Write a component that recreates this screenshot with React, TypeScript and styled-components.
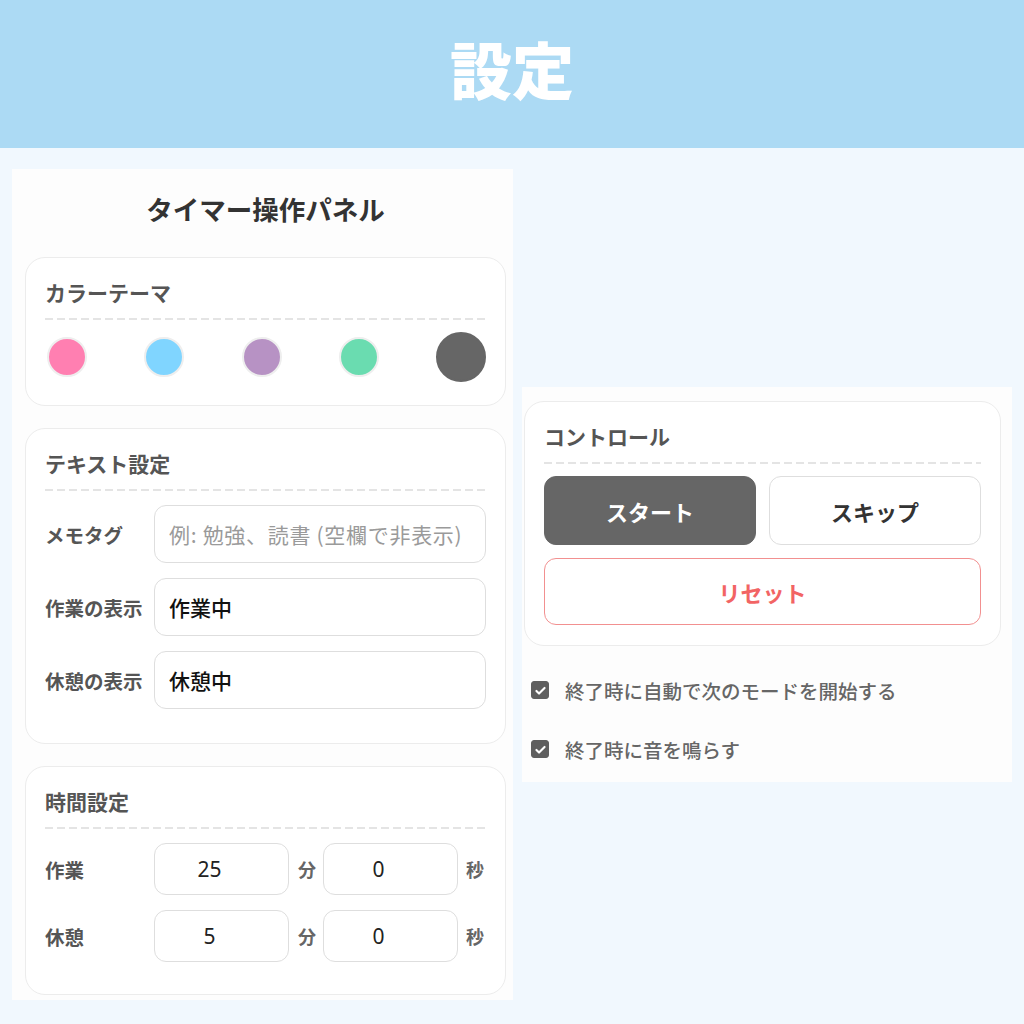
import { useState } from 'react';
import styled, { createGlobalStyle } from 'styled-components';

const GlobalStyle = createGlobalStyle`
  * {
    box-sizing: border-box;
  }

  body {
    margin: 0;
    background: #f1f8fe;
    font-family: 'Noto Sans CJK JP', 'Noto Sans', sans-serif;
    color: #333;
  }
`;

const Page = styled.div`
  width: 1024px;
  height: 1024px;
  display: flex;
  flex-direction: column;
  overflow: hidden;
`;

const Header = styled.header`
  height: 148px;
  flex-shrink: 0;
  background: #acdaf4;
  display: flex;
  align-items: center;
  justify-content: center;
`;

const HeaderTitle = styled.h1`
  margin: 0 0 12px;
  font-size: 62px;
  font-weight: 900;
  line-height: 1;
  color: #fff;
`;

const Content = styled.main`
  display: flex;
  align-items: center;
  gap: 9px;
  padding: 21px 12px 24px;
`;

const Panel = styled.section<{ $width: number; $pad: string }>`
  width: ${(p) => p.$width}px;
  padding: ${(p) => p.$pad};
  background: #fdfdfd;
  display: flex;
  flex-direction: column;
`;

const PanelTitle = styled.h2`
  margin: 0 0 30px;
  font-size: 26.5px;
  line-height: 36px;
  font-weight: 700;
  text-align: center;
  color: #333;
`;

const CardStack = styled.div`
  display: flex;
  flex-direction: column;
  gap: 22px;
`;

const Card = styled.div<{ $pb: number }>`
  background: #fff;
  border: 1px solid #ececec;
  border-radius: 20px;
  padding: 19px 19px ${(p) => p.$pb}px;
`;

const CardTitle = styled.h3`
  margin: 0;
  font-size: 21px;
  line-height: 30px;
  font-weight: 700;
  color: #555;
`;

const Divider = styled.div<{ $mb?: number }>`
  height: 2px;
  margin: 11px 0 ${(p) => p.$mb ?? 14}px;
  background: repeating-linear-gradient(to right, #e4e4e4 0 8px, transparent 8px 12px);
`;

const Swatches = styled.div`
  height: 40px;
  display: flex;
  align-items: center;
  justify-content: space-between;
  padding: 0 0 0 2px;
`;

const Swatch = styled.button<{ $color: string; $active?: boolean }>`
  width: ${(p) => (p.$active ? 50 : 40)}px;
  height: ${(p) => (p.$active ? 50 : 40)}px;
  padding: 0;
  border-radius: 50%;
  background: ${(p) => p.$color};
  border: 2px solid ${(p) => (p.$active ? p.$color : '#eeeeee')};
  cursor: pointer;
`;

const Rows = styled.div`
  display: flex;
  flex-direction: column;
  gap: 15px;
`;

const Row = styled.label`
  display: flex;
  align-items: center;
`;

const Label = styled.span`
  width: 100px;
  margin-right: 9px;
  flex-shrink: 0;
  font-size: 19.5px;
  font-weight: 700;
  color: #555;
  white-space: nowrap;
`;

const TextInput = styled.input`
  flex: 1;
  min-width: 0;
  height: 58px;
  padding: 0 14px;
  border: 1.5px solid #dedede;
  border-radius: 12px;
  background: #fff;
  font-family: 'Noto Sans CJK JP', sans-serif;
  font-size: 21px;
  font-weight: 500;
  color: #111;
  outline: none;

  &::placeholder {
    color: #9a9a9a;
    font-weight: 400;
    letter-spacing: 0.7px;
  }
`;

const NumberInput = styled.input`
  width: 135px;
  height: 52px;
  padding: 0 24px 0 0;
  border: 1.5px solid #dedede;
  border-radius: 12px;
  background: #fff;
  text-align: center;
  font-family: 'Noto Sans', 'Noto Sans CJK JP', sans-serif;
  font-size: 21px;
  color: #222;
  outline: none;
`;

const Unit = styled.span<{ $w: number; $ml: number }>`
  width: ${(p) => p.$w}px;
  margin-left: ${(p) => p.$ml}px;
  flex-shrink: 0;
  font-size: 18px;
  font-weight: 700;
  color: #666;
`;

const ButtonGrid = styled.div`
  display: grid;
  grid-template-columns: 1fr 1fr;
  gap: 13px;
`;

const Button = styled.button<{ $variant: 'primary' | 'plain' | 'danger'; $h: number }>`
  height: ${(p) => p.$h}px;
  border-radius: 12px;
  font-family: 'Noto Sans CJK JP', sans-serif;
  font-size: 22px;
  font-weight: 700;
  cursor: pointer;
  background: ${(p) => (p.$variant === 'primary' ? '#666666' : '#fff')};
  color: ${(p) =>
    p.$variant === 'primary' ? '#fff' : p.$variant === 'danger' ? '#f26464' : '#333'};
  border: 1.5px solid
    ${(p) =>
      p.$variant === 'primary' ? '#666666' : p.$variant === 'danger' ? '#f29090' : '#dedede'};
`;

const ResetButton = styled(Button)`
  width: 100%;
  margin-top: 13px;
`;

const Checks = styled.div`
  display: flex;
  flex-direction: column;
  gap: 31px;
  margin-top: 30px;
  padding-left: 7px;
`;

const CheckRow = styled.label`
  height: 28px;
  display: flex;
  align-items: center;
  gap: 16px;
  font-size: 19.5px;
  font-weight: 500;
  color: #666;
  cursor: pointer;
`;

const CheckBox = styled.span<{ $on: boolean }>`
  width: 18px;
  height: 18px;
  border-radius: 3px;
  background: ${(p) => (p.$on ? '#5f5f5f' : '#fff')};
  border: 1.5px solid #5f5f5f;
  display: flex;
  align-items: center;
  justify-content: center;
`;

const swatchColors = ['#ff7fb1', '#80d5ff', '#b792c4', '#6adcb0', '#666666'];

const Check = ({ on, label, onToggle }: { on: boolean; label: string; onToggle: () => void }) => (
  <CheckRow onClick={onToggle}>
    <CheckBox $on={on}>
      {on && (
        <svg width="13" height="13" viewBox="0 0 16 16">
          <path
            d="M3 8.5l3.2 3.2L13 4.8"
            fill="none"
            stroke="#fff"
            strokeWidth="2.6"
            strokeLinecap="round"
            strokeLinejoin="round"
          />
        </svg>
      )}
    </CheckBox>
    {label}
  </CheckRow>
);

export default function App() {
  const [theme, setTheme] = useState(4);
  const [memo, setMemo] = useState('');
  const [workLabel, setWorkLabel] = useState('作業中');
  const [breakLabel, setBreakLabel] = useState('休憩中');
  const [autoNext, setAutoNext] = useState(true);
  const [sound, setSound] = useState(true);

  return (
    <Page>
      <GlobalStyle />
      <Header>
        <HeaderTitle>設定</HeaderTitle>
      </Header>

      <Content>
        <Panel $width={501} $pad="22px 7px 5px 13px">
          <PanelTitle>タイマー操作パネル</PanelTitle>
          <CardStack>
            <Card $pb={28}>
              <CardTitle>カラーテーマ</CardTitle>
              <Divider $mb={17} />
              <Swatches>
                {swatchColors.map((c, i) => (
                  <Swatch key={c} $color={c} $active={i === theme} onClick={() => setTheme(i)} />
                ))}
              </Swatches>
            </Card>

            <Card $pb={34}>
              <CardTitle>テキスト設定</CardTitle>
              <Divider />
              <Rows>
                <Row>
                  <Label>メモタグ</Label>
                  <TextInput
                    value={memo}
                    placeholder="例: 勉強、読書 (空欄で非表示)"
                    onChange={(e) => setMemo(e.target.value)}
                  />
                </Row>
                <Row>
                  <Label>作業の表示</Label>
                  <TextInput value={workLabel} onChange={(e) => setWorkLabel(e.target.value)} />
                </Row>
                <Row>
                  <Label>休憩の表示</Label>
                  <TextInput value={breakLabel} onChange={(e) => setBreakLabel(e.target.value)} />
                </Row>
              </Rows>
            </Card>

            <Card $pb={32}>
              <CardTitle>時間設定</CardTitle>
              <Divider />
              <Rows>
                <Row>
                  <Label>作業</Label>
                  <NumberInput defaultValue="25" inputMode="numeric" />
                  <Unit $w={18} $ml={9}>分</Unit>
                  <NumberInput defaultValue="0" inputMode="numeric" style={{ marginLeft: 7 }} />
                  <Unit $w={20} $ml={8}>秒</Unit>
                </Row>
                <Row>
                  <Label>休憩</Label>
                  <NumberInput defaultValue="5" inputMode="numeric" />
                  <Unit $w={18} $ml={9}>分</Unit>
                  <NumberInput defaultValue="0" inputMode="numeric" style={{ marginLeft: 7 }} />
                  <Unit $w={20} $ml={8}>秒</Unit>
                </Row>
              </Rows>
            </Card>
          </CardStack>
        </Panel>

        <Panel $width={490} $pad="14px 11px 19px 2px">
          <Card $pb={20}>
            <CardTitle>コントロール</CardTitle>
            <Divider $mb={12} />
            <ButtonGrid>
              <Button $variant="primary" $h={69}>スタート</Button>
              <Button $variant="plain" $h={69}>スキップ</Button>
            </ButtonGrid>
            <ResetButton $variant="danger" $h={67}>リセット</ResetButton>
          </Card>
          <Checks>
            <Check
              on={autoNext}
              label="終了時に自動で次のモードを開始する"
              onToggle={() => setAutoNext(!autoNext)}
            />
            <Check on={sound} label="終了時に音を鳴らす" onToggle={() => setSound(!sound)} />
          </Checks>
        </Panel>
      </Content>
    </Page>
  );
}
